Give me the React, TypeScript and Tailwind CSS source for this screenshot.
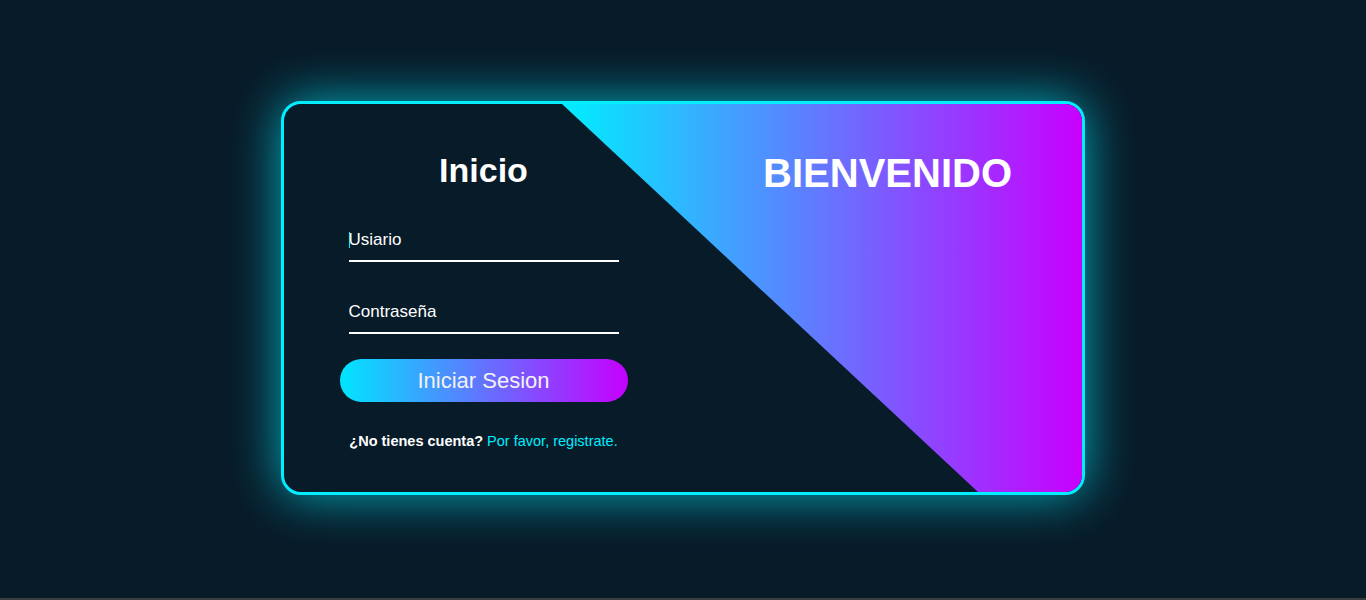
import React from "react";

export default function App() {
  return (
    <div className="w-full bg-[#081b29] font-['Liberation_Sans',Arial,sans-serif]">
      <div className="h-[598px] pb-[2px] flex items-center justify-center">
        <div className="relative w-[804px] h-[394px] border-[3px] border-[#0ef] rounded-[20px] overflow-hidden bg-[#081b29] shadow-[0_0_50px_rgba(0,238,255,0.7)]">
          <div
            className="absolute inset-0 bg-[linear-gradient(to_right,transparent_278px,#00eeff_278px,#c800ff_798px)] [clip-path:polygon(278px_0,100%_0,100%_100%,694px_100%)]"
          />
          <div className="relative flex h-full">
            <div className="w-1/2 flex flex-col items-center pt-[46px]">
              <h2 className="text-[34px] leading-[40px] font-bold text-white">Inicio</h2>
              <div className="relative w-[270px] h-[50px] border-b-2 border-white mt-[22px]">
                <span className="absolute left-0 top-[20px] w-px h-[16px] bg-[#0ef]" />
                <label className="absolute left-0 top-[18px] text-[17px] leading-[20px] text-white">Usiario</label>
              </div>
              <div className="relative w-[270px] h-[50px] border-b-2 border-white mt-[22px]">
                <label className="absolute left-0 top-[18px] text-[17px] leading-[20px] text-white">Contraseña</label>
              </div>
              <button className="mt-[25px] w-[288px] h-[43px] rounded-full bg-[linear-gradient(to_right,#00e5ff,#c600ff)] text-[22px] text-[#f2f2f2] leading-none">
                Iniciar Sesion
              </button>
              <p className="mt-[29px] w-[290px] text-center text-[14.5px] leading-[20px]">
                <span className="font-bold text-white">¿No tienes cuenta? </span>
                <a className="text-[#0ef]">Por favor, registrate.</a>
              </p>
            </div>
            <div className="w-1/2 text-right pr-[70px] pt-[46px]">
              <h2 className="text-[40px] leading-[46px] font-bold text-white">BIENVENIDO</h2>
            </div>
          </div>
        </div>
      </div>
      <div className="h-[2px] bg-[#3a3d40]" />
    </div>
  );
}
